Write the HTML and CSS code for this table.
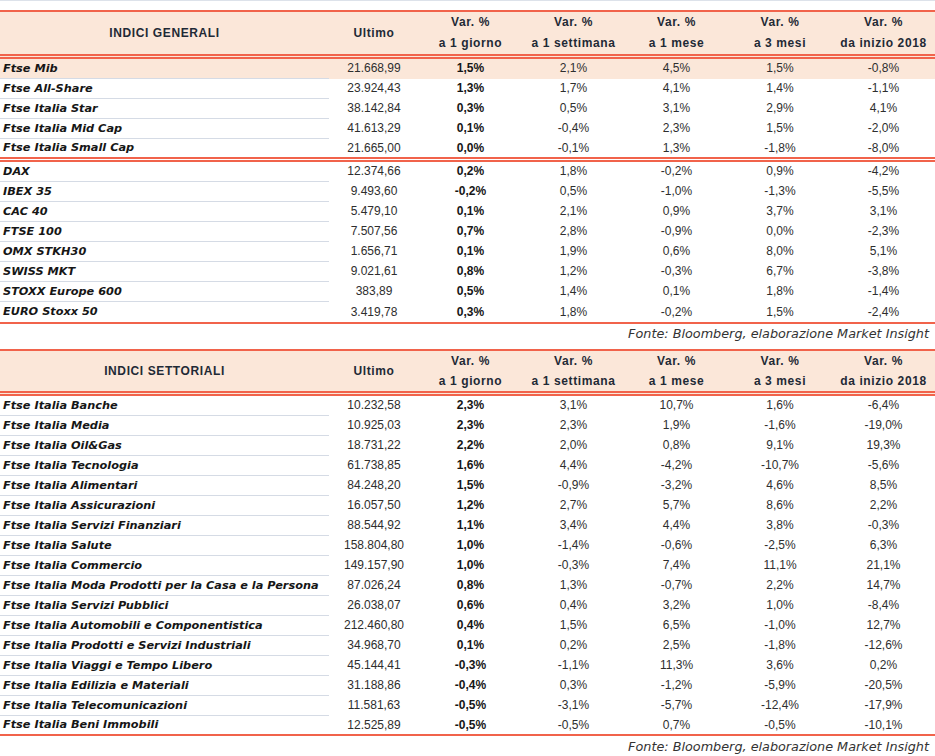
FILE: index.html
```html
<!DOCTYPE html>
<html lang="it">
<head>
<meta charset="utf-8">
<title>Indici</title>
<link rel="stylesheet" href="styles.css">
</head>
<body>
<div class="page">
  <table class="tbl t1">
    <colgroup>
      <col class="c-name"><col class="c-last"><col class="c-var"><col class="c-var"><col class="c-var"><col class="c-var5"><col class="c-var">
    </colgroup>
    <thead>
      <tr>
        <th class="title">INDICI GENERALI</th>
        <th>Ultimo</th>
        <th>Var. %<br>a 1 giorno</th>
        <th>Var. %<br>a 1 settimana</th>
        <th>Var. %<br>a 1 mese</th>
        <th>Var. %<br>a 3 mesi</th>
        <th>Var. %<br>da inizio 2018</th>
      </tr>
    </thead>
    <tbody>
      <tr class="hl"><td>Ftse Mib</td><td>21.668,99</td><td>1,5%</td><td>2,1%</td><td>4,5%</td><td>1,5%</td><td>-0,8%</td></tr>
      <tr><td>Ftse All-Share</td><td>23.924,43</td><td>1,3%</td><td>1,7%</td><td>4,1%</td><td>1,4%</td><td>-1,1%</td></tr>
      <tr><td>Ftse Italia Star</td><td>38.142,84</td><td>0,3%</td><td>0,5%</td><td>3,1%</td><td>2,9%</td><td>4,1%</td></tr>
      <tr><td>Ftse Italia Mid Cap</td><td>41.613,29</td><td>0,1%</td><td>-0,4%</td><td>2,3%</td><td>1,5%</td><td>-2,0%</td></tr>
      <tr class="sep"><td>Ftse Italia Small Cap</td><td>21.665,00</td><td>0,0%</td><td>-0,1%</td><td>1,3%</td><td>-1,8%</td><td>-8,0%</td></tr>
      <tr><td>DAX</td><td>12.374,66</td><td>0,2%</td><td>1,8%</td><td>-0,2%</td><td>0,9%</td><td>-4,2%</td></tr>
      <tr><td>IBEX 35</td><td>9.493,60</td><td>-0,2%</td><td>0,5%</td><td>-1,0%</td><td>-1,3%</td><td>-5,5%</td></tr>
      <tr><td>CAC 40</td><td>5.479,10</td><td>0,1%</td><td>2,1%</td><td>0,9%</td><td>3,7%</td><td>3,1%</td></tr>
      <tr><td>FTSE 100</td><td>7.507,56</td><td>0,7%</td><td>2,8%</td><td>-0,9%</td><td>0,0%</td><td>-2,3%</td></tr>
      <tr><td>OMX STKH30</td><td>1.656,71</td><td>0,1%</td><td>1,9%</td><td>0,6%</td><td>8,0%</td><td>5,1%</td></tr>
      <tr><td>SWISS MKT</td><td>9.021,61</td><td>0,8%</td><td>1,2%</td><td>-0,3%</td><td>6,7%</td><td>-3,8%</td></tr>
      <tr><td>STOXX Europe 600</td><td>383,89</td><td>0,5%</td><td>1,4%</td><td>0,1%</td><td>1,8%</td><td>-1,4%</td></tr>
      <tr class="last"><td>EURO Stoxx 50</td><td>3.419,78</td><td>0,3%</td><td>1,8%</td><td>-0,2%</td><td>1,5%</td><td>-2,4%</td></tr>
    </tbody>
  </table>
  <p class="source s1">Fonte: Bloomberg, elaborazione Market Insight</p>

  <table class="tbl t2">
    <colgroup>
      <col class="c-name"><col class="c-last"><col class="c-var"><col class="c-var"><col class="c-var"><col class="c-var5"><col class="c-var">
    </colgroup>
    <thead>
      <tr>
        <th class="title">INDICI SETTORIALI</th>
        <th>Ultimo</th>
        <th>Var. %<br>a 1 giorno</th>
        <th>Var. %<br>a 1 settimana</th>
        <th>Var. %<br>a 1 mese</th>
        <th>Var. %<br>a 3 mesi</th>
        <th>Var. %<br>da inizio 2018</th>
      </tr>
    </thead>
    <tbody>
      <tr><td>Ftse Italia Banche</td><td>10.232,58</td><td>2,3%</td><td>3,1%</td><td>10,7%</td><td>1,6%</td><td>-6,4%</td></tr>
      <tr><td>Ftse Italia Media</td><td>10.925,03</td><td>2,3%</td><td>2,3%</td><td>1,9%</td><td>-1,6%</td><td>-19,0%</td></tr>
      <tr><td>Ftse Italia Oil&amp;Gas</td><td>18.731,22</td><td>2,2%</td><td>2,0%</td><td>0,8%</td><td>9,1%</td><td>19,3%</td></tr>
      <tr><td>Ftse Italia Tecnologia</td><td>61.738,85</td><td>1,6%</td><td>4,4%</td><td>-4,2%</td><td>-10,7%</td><td>-5,6%</td></tr>
      <tr><td>Ftse Italia Alimentari</td><td>84.248,20</td><td>1,5%</td><td>-0,9%</td><td>-3,2%</td><td>4,6%</td><td>8,5%</td></tr>
      <tr><td>Ftse Italia Assicurazioni</td><td>16.057,50</td><td>1,2%</td><td>2,7%</td><td>5,7%</td><td>8,6%</td><td>2,2%</td></tr>
      <tr><td>Ftse Italia Servizi Finanziari</td><td>88.544,92</td><td>1,1%</td><td>3,4%</td><td>4,4%</td><td>3,8%</td><td>-0,3%</td></tr>
      <tr><td>Ftse Italia Salute</td><td>158.804,80</td><td>1,0%</td><td>-1,4%</td><td>-0,6%</td><td>-2,5%</td><td>6,3%</td></tr>
      <tr><td>Ftse Italia Commercio</td><td>149.157,90</td><td>1,0%</td><td>-0,3%</td><td>7,4%</td><td>11,1%</td><td>21,1%</td></tr>
      <tr><td>Ftse Italia Moda Prodotti per la Casa e la Persona</td><td>87.026,24</td><td>0,8%</td><td>1,3%</td><td>-0,7%</td><td>2,2%</td><td>14,7%</td></tr>
      <tr><td>Ftse Italia Servizi Pubblici</td><td>26.038,07</td><td>0,6%</td><td>0,4%</td><td>3,2%</td><td>1,0%</td><td>-8,4%</td></tr>
      <tr><td>Ftse Italia Automobili e Componentistica</td><td>212.460,80</td><td>0,4%</td><td>1,5%</td><td>6,5%</td><td>-1,0%</td><td>12,7%</td></tr>
      <tr><td>Ftse Italia Prodotti e Servizi Industriali</td><td>34.968,70</td><td>0,1%</td><td>0,2%</td><td>2,5%</td><td>-1,8%</td><td>-12,6%</td></tr>
      <tr><td>Ftse Italia Viaggi e Tempo Libero</td><td>45.144,41</td><td>-0,3%</td><td>-1,1%</td><td>11,3%</td><td>3,6%</td><td>0,2%</td></tr>
      <tr><td>Ftse Italia Edilizia e Materiali</td><td>31.188,86</td><td>-0,4%</td><td>0,3%</td><td>-1,2%</td><td>-5,9%</td><td>-20,5%</td></tr>
      <tr><td>Ftse Italia Telecomunicazioni</td><td>11.581,63</td><td>-0,5%</td><td>-3,1%</td><td>-5,7%</td><td>-12,4%</td><td>-17,9%</td></tr>
      <tr class="end"><td>Ftse Italia Beni Immobili</td><td>12.525,89</td><td>-0,5%</td><td>-0,5%</td><td>0,7%</td><td>-0,5%</td><td>-10,1%</td></tr>
    </tbody>
  </table>
  <p class="source s2">Fonte: Bloomberg, elaborazione Market Insight</p>
</div>
</body>
</html>
```

FILE: styles.css
```css
html, body {
  margin: 0;
  padding: 0;
  background: #ffffff;
}

body {
  font-family: "Liberation Sans", Arial, sans-serif;
  font-size: 12px;
  color: #262626;
}

.page {
  width: 935px;
  border-top: 1px solid #dde2ea;
  padding-top: 9px;
}

.tbl {
  width: 935px;
  table-layout: fixed;
  border-collapse: separate;
  border-spacing: 0;
}

.c-name { width: 329px; }
.c-last { width: 90px; }
.c-var { width: 103px; }
.c-var5 { width: 104px; }

.tbl th {
  background: #fbe7d9;
  border-top: 2px solid #f1634b;
  border-bottom: 5px double #f1634b;
  padding: 0;
  font-weight: bold;
  color: #1f2a36;
  text-align: center;
  vertical-align: middle;
  letter-spacing: 0.6px;
}

.t1 th {
  height: 41px;
  line-height: 21px;
}

.t2 th {
  height: 39px;
  line-height: 20px;
}

.tbl th.title {
  letter-spacing: 0.6px;
}

.tbl td {
  height: 19px;
  padding: 0;
  border-bottom: 1px solid transparent;
  text-align: center;
  vertical-align: middle;
  line-height: 19px;
  white-space: nowrap;
  color: #2e2e2e;
}

.tbl td:first-child {
  text-align: left;
  padding-left: 3px;
  font-family: "DejaVu Sans", "Liberation Sans", sans-serif;
  font-size: 11.3px;
  font-weight: bold;
  font-style: italic;
  color: #161616;
  border-bottom-color: #d5dbe5;
}

.tbl td:nth-child(3) {
  font-weight: bold;
  color: #161616;
}

.tbl tr.hl td {
  background: #fbe7d9;
}

.tbl tr.sep td {
  height: 18px;
  line-height: 18px;
  border-bottom: 5px double #f1634b;
}

.tbl tr.last td {
  height: 20px;
  line-height: 20px;
  border-bottom: 2px solid #f1634b;
}

.tbl tr.end td {
  height: 18px;
  line-height: 18px;
  border-bottom: 2px solid #f1634b;
}

.source {
  margin: 0;
  width: 929px;
  text-align: right;
  font-family: "DejaVu Sans", "Liberation Sans", sans-serif;
  font-style: italic;
  color: #333333;
  font-size: 12.8px;
}

.s1 {
  height: 25px;
  line-height: 20px;
}

.s2 {
  height: 21px;
  line-height: 21px;
}
```
